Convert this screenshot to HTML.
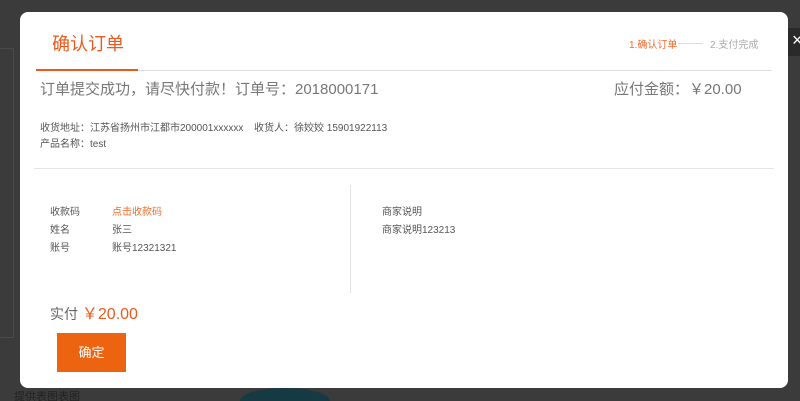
<!DOCTYPE html>
<html style="overflow:hidden;width:800px;height:401px"><head><meta charset="utf-8"><style>
*{margin:0;padding:0;box-sizing:border-box}
body{width:800px;height:401px;background:#3b3b3b;position:relative;overflow:hidden;font-family:"Liberation Sans","Microsoft YaHei","Noto Sans CJK SC",sans-serif;}
.a{position:absolute;white-space:nowrap}
.m{position:absolute;left:20px;top:12px;width:768px;height:376px;background:#fff;border-radius:8px}
</style></head><body>
<div class="a" style="left:0;top:48px;width:14px;height:290px;border:1px solid #4a4a4a;border-left:none"></div>
<div class="a" style="left:240px;top:388px;width:90px;height:13px;border-radius:45px 45px 0 0/13px 13px 0 0;background:#163a44"></div>
<div class="a" style="left:14px;top:391px;height:10px;overflow:hidden;font-size:11px;line-height:12px;color:#222">提供表图表图</div>
<div class="a" style="left:788px;top:28px;width:12px;height:28px;background:#2a2a2a"></div>
<div class="a" style="left:792px;top:30px;font-size:18px;line-height:20px;color:#fff">×</div>
<div class="m">
<div class="a" style="left:32px;top:18px;font-size:18px;color:#eb5a1c">确认订单</div>
<div class="a" style="left:609px;top:24px;font-size:10px;color:#f06a2a">1.确认订单</div>
<div class="a" style="left:658px;top:31px;width:25px;height:1px;background:#ddd"></div>
<div class="a" style="left:690px;top:24px;font-size:10px;color:#aaa">2.支付完成</div>
<div class="a" style="left:16px;top:58px;width:736px;height:1px;background:#ddd"></div>
<div class="a" style="left:16px;top:57px;width:102px;height:2px;background:#eb5a1c"></div>
<div class="a" style="left:20px;top:66px;font-size:15px;color:#777">订单提交成功，请尽快付款！订单号：2018000171</div>
<div class="a" style="left:594px;top:66px;font-size:15px;color:#777">应付金额：￥20.00</div>
<div class="a" style="left:20px;top:107px;font-size:10px;color:#555">收货地址：江苏省扬州市江都市200001xxxxxx</div>
<div class="a" style="left:234px;top:107px;font-size:10px;color:#555">收货人：徐姣姣 15901922113</div>
<div class="a" style="left:20px;top:123px;font-size:10px;color:#555">产品名称：test</div>
<div class="a" style="left:14px;top:156px;width:740px;height:1px;background:#e5e5e5"></div>
<div class="a" style="left:330px;top:173px;width:1px;height:108px;background:#e2e2e2"></div>
<div class="a" style="left:30px;top:192px;font-size:10px;color:#555;line-height:18px">收款码<br>姓名<br>账号</div>
<div class="a" style="left:92px;top:192px;font-size:10px;color:#555;line-height:18px"><span style="color:#f06a2a">点击收款码</span><br>张三<br>账号12321321</div>
<div class="a" style="left:362px;top:192px;font-size:10px;color:#555;line-height:18px">商家说明<br>商家说明123213</div>
<div class="a" style="left:30px;top:288px;font-size:14px;color:#666">实付 <span style="color:#eb5a1c;font-size:16px">￥20.00</span></div>
<div class="a" style="left:37px;top:321px;width:69px;height:39px;background:#ec6410;color:#fff;font-size:13px;text-align:center;line-height:39px">确定</div>
</div>
</body></html>
